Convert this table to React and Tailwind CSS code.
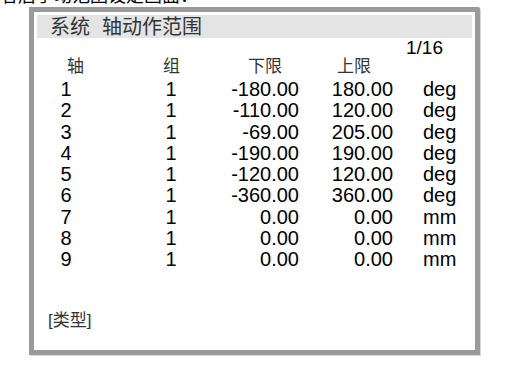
export default function App() {
  const rows = [
    ["1", "1", "-180.00", "180.00", "deg"],
    ["2", "1", "-110.00", "120.00", "deg"],
    ["3", "1", "-69.00", "205.00", "deg"],
    ["4", "1", "-190.00", "190.00", "deg"],
    ["5", "1", "-120.00", "120.00", "deg"],
    ["6", "1", "-360.00", "360.00", "deg"],
    ["7", "1", "0.00", "0.00", "mm"],
    ["8", "1", "0.00", "0.00", "mm"],
    ["9", "1", "0.00", "0.00", "mm"],
  ];
  const cjk = { fontFamily: '"Liberation Sans", "Noto Sans CJK SC", sans-serif' };
  return (
    <div className="w-[512px] h-[377px] bg-white overflow-hidden" style={cjk}>
      <div className="h-[7px] overflow-hidden">
        <div className="-mt-[13px] text-[18px] leading-[18px] text-black whitespace-nowrap">者后手动范围设定画面：</div>
      </div>
      <div className="ml-[29px] w-[451px] h-[348px] border-[5px] border-[#9a9a9a] rounded-tr-[2px] shadow-[1px_1px_0_#d8d8d8] p-[3px] flex flex-col bg-white">
        <div className="h-[23px] bg-[#e4e4e4] pl-[13px] flex items-center text-[20px] leading-[20px] text-[#333]">
          <span>系统</span>
          <span className="ml-[12px]">轴动作范围</span>
        </div>
        <div className="h-[19px] flex justify-end pr-[29px] text-[19px] leading-[19px] text-black">1/16</div>
        <div className="mt-[1px] h-[17px] flex text-[17px] leading-[17px] text-[#333]">
          <div className="pl-[30px] w-[126px]">轴</div>
          <div className="w-[85px]">组</div>
          <div className="w-[89px]">下限</div>
          <div>上限</div>
        </div>
        <div className="mt-[4px] flex flex-col text-[20px] text-black">
          {rows.map((r) => (
            <div key={r[0]} className="flex h-[21.25px] leading-[21px]">
              <div className="w-[58px] text-center">{r[0]}</div>
              <div className="ml-[46px] w-[60px] text-center">{r[1]}</div>
              <div className="w-[98px] text-right">{r[2]}</div>
              <div className="w-[94px] text-right">{r[3]}</div>
              <div className="pl-[30px]">{r[4]}</div>
            </div>
          ))}
        </div>
        <div className="mt-[42px] pl-[11px] text-[17px] leading-[17px] text-[#333]">[类型]</div>
      </div>
    </div>
  );
}
